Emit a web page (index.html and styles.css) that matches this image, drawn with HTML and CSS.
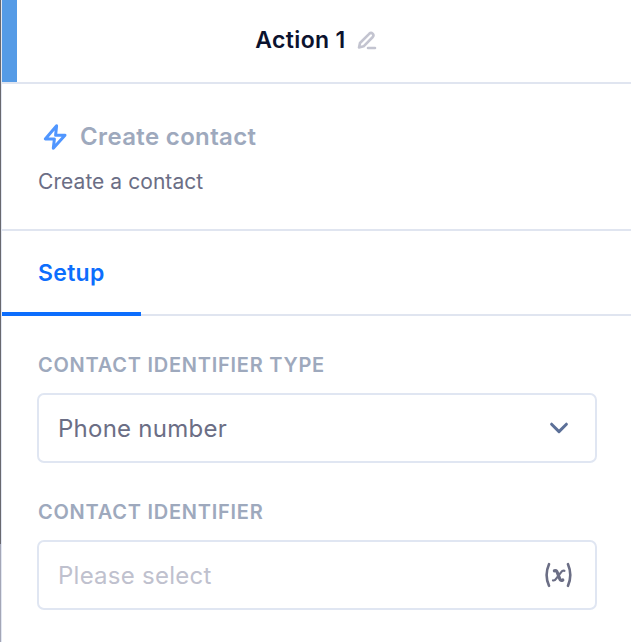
FILE: index.html
```html
<!DOCTYPE html>
<html lang="en">
  <head>
    <meta charset="utf-8" />
    <meta name="viewport" content="width=device-width, initial-scale=1" />
    <title>Action 1</title>
    <link rel="stylesheet" href="styles.css">
  </head>
  <body>
    <div class="edge"></div>
    <main class="panel">
      <header class="header">
        <h1 class="header-title">Action 1</h1>
        <svg class="icon-edit" viewBox="0 0 20 20" width="20" height="20">
          <path d="M2 17.5 3 13 12.2 3.8Q14 2.2 15.7 3.7Q17.2 5.3 15.8 7L6.6 16.3ZM11 18H18" />
        </svg>
      </header>

      <section class="summary">
        <div class="summary-heading">
          <svg class="icon-bolt" viewBox="0 0 26 28" width="26" height="28">
            <path d="M14.6 2.8 3.3 15.9H12.4L11.3 25.2 23 12.2H13.6Z" />
          </svg>
          <h2 class="summary-title">Create contact</h2>
        </div>
        <p class="summary-text">Create a contact</p>
      </section>

      <nav class="tabs">
        <a class="tab"><span class="tab-label">Setup</span></a>
      </nav>

      <form class="fields">
        <div class="field">
          <div class="label">Contact identifier type</div>
          <div class="control">
            <span class="value">Phone number</span>
            <svg class="icon-chevron" viewBox="0 0 20 14" width="20" height="14">
              <path d="m2.6 3.2 7.4 7.4 7.4-7.4" />
            </svg>
          </div>
        </div>
        <div class="field">
          <div class="label">Contact identifier</div>
          <div class="control">
            <span class="value placeholder">Please select</span>
            <svg class="icon-variable" viewBox="0 0 30 28" width="30" height="28">
              <path class="variable-paren" d="M6 3.2Q1.2 14 6 24.8M25 3.2Q29.6 14 25 24.8" />
              <path class="variable-x" d="M11.4 9.8Q13.4 9 14.2 11.2L16.8 18Q17.6 20.2 19.8 19" />
              <path class="variable-stroke" d="M21.4 9.8Q19.6 9.2 17.8 11.6L13.4 17.4Q11.6 20 10 19.4" />
            </svg>
          </div>
        </div>
      </form>
    </main>
  </body>
</html>
```

FILE: styles.css
```css
*,
*::before,
*::after {
  box-sizing: border-box;
  margin: 0;
}

body {
  background: #fff;
  display: flex;
  font-family: Inter, "Liberation Sans", sans-serif;
  height: 642px;
  overflow: hidden;
}

svg {
  fill: none;
  flex: none;
  stroke-linecap: round;
  stroke-linejoin: round;
}

.edge {
  background: linear-gradient(#68686e 544px, #a4a6b6 544px);
  width: 1px;
}

.panel {
  border-left: 1px solid #e2e7f2;
  flex: 1;
}

.header {
  align-items: center;
  border-bottom: 2px solid #e0e5f0;
  display: flex;
  gap: 11px;
  height: 84px;
  justify-content: center;
  padding: 0 1px 2px 0;
  position: relative;
}

.header::before {
  background: #559be6;
  content: "";
  height: 82px;
  left: 0;
  position: absolute;
  top: 0;
  width: 15px;
}

.header-title {
  color: #0b122e;
  font-size: 23px;
  font-weight: 600;
  letter-spacing: 0.35px;
  line-height: 28px;
}

.icon-edit {
  stroke: #c3c4d0;
  stroke-width: 2.6;
}

.summary {
  border-bottom: 2px solid #e0e5f0;
  height: 147px;
  padding: 38px 36px 0;
}

.summary-heading {
  align-items: center;
  display: flex;
  gap: 12px;
  padding-left: 4px;
}

.icon-bolt {
  stroke: #5096ff;
  stroke-width: 3;
}

.summary-title {
  color: #9ea9bd;
  font-size: 24px;
  font-weight: 600;
  letter-spacing: 0.35px;
  line-height: 30px;
}

.summary-text {
  color: #6b6e85;
  font-size: 21px;
  letter-spacing: 0.06px;
  line-height: 28px;
  margin-top: 16px;
}

.tabs {
  border-bottom: 2px solid #e0e5f0;
  display: flex;
  height: 85px;
}

.tab {
  border-bottom: 4px solid #0d6efd;
  color: #0d6efd;
  height: 85px;
  padding: 28px 35px 0 36px;
  width: 139px;
}

.tab-label {
  display: block;
  font-size: 23px;
  font-weight: 600;
  letter-spacing: 0.3px;
  line-height: 28px;
}

.fields {
  display: grid;
  gap: 36px;
  padding: 36px 34px 0 35px;
}

.label {
  color: #9ea9bd;
  font-size: 20px;
  font-weight: 600;
  letter-spacing: 0.75px;
  line-height: 26px;
  padding-left: 1px;
  text-transform: uppercase;
}

.control {
  align-items: center;
  border: 2px solid #e0e6f2;
  border-radius: 7px;
  display: flex;
  height: 70px;
  justify-content: space-between;
  margin-top: 15px;
  padding: 0 22px 0 19px;
}

.value {
  color: #6b6e85;
  font-size: 24px;
  letter-spacing: 0.25px;
  line-height: 30px;
  padding-top: 1px;
}

.placeholder {
  color: #bfc1ce;
}

.icon-chevron {
  margin-right: 4px;
  stroke: #5c7098;
  stroke-width: 3;
}

.icon-variable {
  stroke: #6b6e85;
}

.variable-paren {
  stroke-width: 2.6;
}

.variable-x {
  stroke-width: 3.2;
}

.variable-stroke {
  stroke-width: 2.2;
}
```
